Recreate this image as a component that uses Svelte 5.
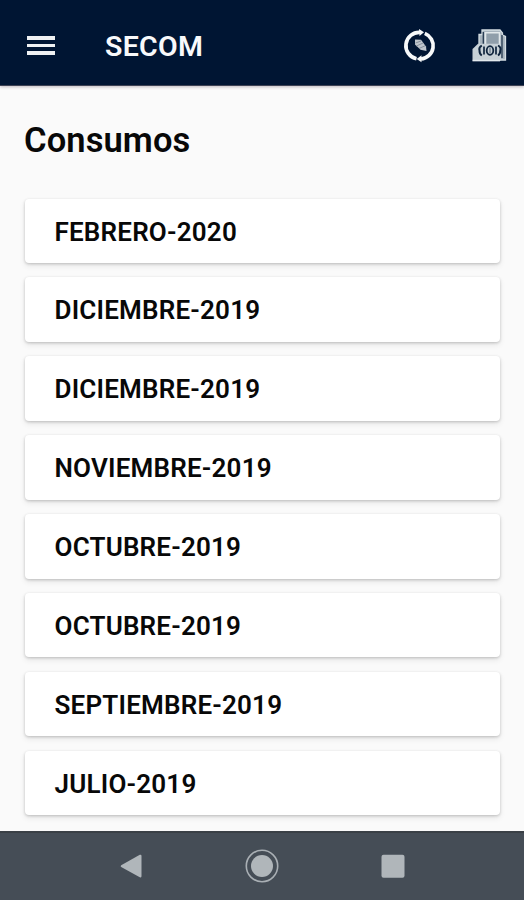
<script>
  const title = "SECOM";
  const heading = "Consumos";

  let periods = [
    "FEBRERO-2020",
    "DICIEMBRE-2019",
    "DICIEMBRE-2019",
    "NOVIEMBRE-2019",
    "OCTUBRE-2019",
    "OCTUBRE-2019",
    "SEPTIEMBRE-2019",
    "JULIO-2019",
  ];
</script>

<div class="screen">
  <header class="toolbar">
    <button class="menu" aria-label="Menu">
      <span></span>
      <span></span>
      <span></span>
    </button>
    <h1>{title}</h1>

    <div class="actions">
      <!-- Sync -->
      <button aria-label="Sync">
        <svg width="36" height="38" viewBox="0 0 36 38">
          <g fill="none" stroke="#f7f9fa" stroke-width="3.7">
            <path d="M14.5 31.7 A13.3 13.3 0 0 1 18 5.4" />
            <path d="M22.8 6.4 A13.3 13.3 0 0 1 19 32" />
          </g>
          <path d="M17 2 L22 5.3 L17.5 9 Z" fill="#f7f9fa" />
          <path d="M19.5 28.3 L14.7 32 L19.5 35.3 Z" fill="#f7f9fa" />
          <path d="M13 12.5 L19 12.7 L24 19.5 L24.5 24 L18.5 22.8 L13 17.5 Z" fill="#bfc5cc" />
          <path d="M13.5 16 L19 14 M14.5 19 L21 16 M17 21.5 L23 18.8" stroke="#75808e" stroke-width="0.8" />
        </svg>
      </button>

      <!-- Payments -->
      <button aria-label="Payments">
        <svg width="38" height="38" viewBox="0 0 38 38">
          <path d="M8 17 V7.5 H11 V3 H29 L31.5 6 V8 L34.5 9.5 V33 H8 Z" fill="#a8b4be" stroke="#d4dde2" stroke-width="1.3" />
          <path d="M12.3 5 V17 M31 8 V31" stroke="#253950" stroke-width="1.3" />
          <path d="M14.5 17 V5.8 H28.5 V17" fill="#909eaa" stroke="#e1e7ea" stroke-width="1.6" />
          <path d="M1.5 22 L7 16.8 H30 V33.6 H1.5 Z" fill="#c7d0d6" />
          <path d="M1.5 33.6 H29" stroke="#e3e9ed" stroke-width="1.5" />
          <g fill="none" stroke="#10253e">
            <path d="M10.8 18.5 Q7.5 20.5 8.5 23.5 Q8.5 27 10.8 28.5" stroke-width="2" />
            <path d="M27 18.5 Q30.5 20.5 29.3 23.5 Q29.3 27 27 28.5" stroke-width="2" />
            <ellipse cx="19" cy="23.5" rx="3.3" ry="4.3" stroke-width="1.8" />
            <path d="M13 19.5 V27.5 M25 19.5 V27.5" stroke-width="1.7" />
          </g>
          <path d="M19 20.5 V26.5" stroke="#657687" stroke-width="1.2" />
        </svg>
      </button>
    </div>
  </header>

  <main>
    <h2>{heading}</h2>
    <ul class="periods">
      {#each periods as period}
        <li>{period}</li>
      {/each}
    </ul>
  </main>

  <nav>
    <button aria-label="Back">
      <svg width="36" height="36" viewBox="0 0 36 36">
        <path d="M8.2 17.2 L26.8 6.8 Q28.5 6.2 28.5 8 V28 Q28.5 30 26.8 29.2 L8.2 19 Q7 18.1 8.2 17.2 Z" fill="#b0b6ba" />
      </svg>
    </button>
    <button aria-label="Home">
      <svg width="36" height="36" viewBox="0 0 36 36">
        <circle cx="18" cy="18" r="15.7" fill="none" stroke="#a9afb4" stroke-width="1.6" />
        <circle cx="18" cy="18" r="11" fill="#b0b6ba" />
      </svg>
    </button>
    <button aria-label="Recents">
      <svg width="36" height="36" viewBox="0 0 36 36">
        <rect x="6.5" y="6.7" width="23" height="23" rx="2" fill="#b0b6ba" />
      </svg>
    </button>
  </nav>
</div>

<style>
  :global(body) {
    margin: 0;
    background: #fafafa;
  }

  .screen {
    height: 900px;
    display: flex;
    flex-direction: column;
    overflow: hidden;
    background: #fafafa;
    color: #080808;
    font-family: Roboto, "Liberation Sans", sans-serif;
  }

  button {
    display: block;
    padding: 0;
    border: 0;
    background: none;
  }

  svg {
    display: block;
  }

  .toolbar {
    flex: none;
    box-sizing: border-box;
    height: 86px;
    padding: 6px 15px 0 27px;
    display: flex;
    align-items: center;
    background: #001533;
    border-bottom: 1px solid #3d4254;
    box-shadow: 0 1px 3px rgba(60, 40, 60, 0.3);
  }

  .menu {
    width: 28px;
    display: flex;
    flex-direction: column;
    gap: 4px;
  }

  .menu span {
    height: 3.7px;
    background: #eff1f3;
  }

  h1 {
    margin: 2px 0 0 50px;
    color: #f8f9fb;
    font-size: 28.5px;
    font-weight: 600;
    line-height: 34px;
    letter-spacing: 0.3px;
  }

  .actions {
    margin-left: auto;
    display: flex;
    gap: 33px;
  }

  main {
    flex: 1;
    min-height: 0;
    padding: 31px 24px 0 25px;
    overflow: hidden;
  }

  h2 {
    margin: 0 0 0 -1px;
    font-size: 34.5px;
    font-weight: 650;
    line-height: 46px;
    letter-spacing: 0.1px;
  }

  .periods {
    margin: 35.5px 0 0;
    padding: 0;
    display: flex;
    flex-direction: column;
    gap: 14.4px;
    list-style: none;
  }

  li {
    box-sizing: border-box;
    height: 64.5px;
    padding: 1px 29.5px 0;
    border-radius: 4px;
    background: #fff;
    box-shadow:
      0 1px 3px rgba(0, 0, 0, 0.2),
      0 3px 6px rgba(0, 0, 0, 0.08);
    font-size: 26px;
    font-weight: 600;
    line-height: 65px;
    letter-spacing: 0.2px;
  }

  nav {
    flex: none;
    box-sizing: border-box;
    height: 69px;
    padding-bottom: 2px;
    display: flex;
    justify-content: center;
    align-items: center;
    gap: 95px;
    background: #454d56;
    border-top: 2px solid #3a4046;
  }
</style>
